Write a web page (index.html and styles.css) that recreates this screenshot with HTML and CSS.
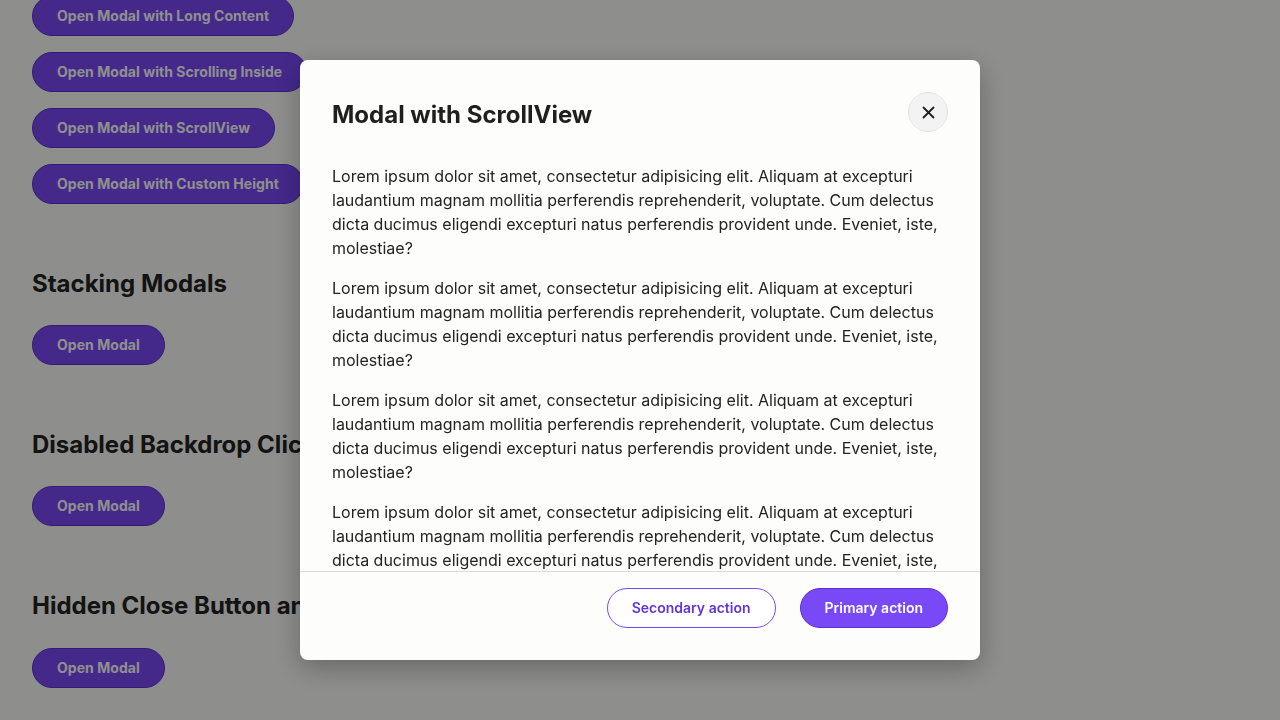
FILE: index.html
```html
<!DOCTYPE html>
<html lang="en">
<head>
<meta charset="utf-8">
<title>Modals</title>
<link rel="stylesheet" href="styles.css">
</head>
<body>
<main class="page">
  <div class="btn-stack">
    <button class="btn btn-primary">Open Modal with Long Content</button>
    <button class="btn btn-primary">Open Modal with Scrolling Inside</button>
    <button class="btn btn-primary">Open Modal with ScrollView</button>
    <button class="btn btn-primary">Open Modal with Custom Height</button>
  </div>
  <section class="section">
    <h2 class="section-title">Stacking Modals</h2>
    <button class="btn btn-primary">Open Modal</button>
  </section>
  <section class="section">
    <h2 class="section-title">Disabled Backdrop Click</h2>
    <button class="btn btn-primary">Open Modal</button>
  </section>
  <section class="section section-last">
    <h2 class="section-title">Hidden Close Button and Header</h2>
    <button class="btn btn-primary">Open Modal</button>
  </section>
</main>

<div class="backdrop">
  <div class="modal" role="dialog" aria-modal="true">
    <header class="modal-header">
      <h1 class="modal-title">Modal with ScrollView</h1>
      <button class="close-btn" aria-label="Close">
        <svg width="13" height="13" viewBox="0 0 13 13" fill="none" stroke="#1f1f1f" stroke-width="1.8" stroke-linecap="round"><path d="M1.5 1.5L11.5 11.5M11.5 1.5L1.5 11.5"/></svg>
      </button>
    </header>
    <div class="modal-body">
      <p>Lorem ipsum dolor sit amet, consectetur adipisicing elit. Aliquam at excepturi laudantium magnam mollitia perferendis reprehenderit, voluptate. Cum delectus dicta ducimus eligendi excepturi natus perferendis provident unde. Eveniet, iste, molestiae?</p>
      <p>Lorem ipsum dolor sit amet, consectetur adipisicing elit. Aliquam at excepturi laudantium magnam mollitia perferendis reprehenderit, voluptate. Cum delectus dicta ducimus eligendi excepturi natus perferendis provident unde. Eveniet, iste, molestiae?</p>
      <p>Lorem ipsum dolor sit amet, consectetur adipisicing elit. Aliquam at excepturi laudantium magnam mollitia perferendis reprehenderit, voluptate. Cum delectus dicta ducimus eligendi excepturi natus perferendis provident unde. Eveniet, iste, molestiae?</p>
      <p>Lorem ipsum dolor sit amet, consectetur adipisicing elit. Aliquam at excepturi laudantium magnam mollitia perferendis reprehenderit, voluptate. Cum delectus dicta ducimus eligendi excepturi natus perferendis provident unde. Eveniet, iste, molestiae?</p>
      <p>Lorem ipsum dolor sit amet, consectetur adipisicing elit. Aliquam at excepturi laudantium magnam mollitia perferendis reprehenderit, voluptate. Cum delectus dicta ducimus eligendi excepturi natus perferendis provident unde. Eveniet, iste, molestiae?</p>
    </div>
    <footer class="modal-footer">
      <button class="btn btn-secondary btn-modal">Secondary action</button>
      <button class="btn btn-primary btn-modal">Primary action</button>
    </footer>
  </div>
</div>
</body>
</html>
```

FILE: styles.css
```css
* { box-sizing: border-box; }

html, body {
  margin: 0;
  height: 100%;
  overflow: hidden;
}

body {
  background: #fdfdfb;
  color: #212121;
  font-family: Inter, "Noto Sans", sans-serif;
}

.page {
  padding: 0 32px;
  margin-top: -4px;
}

.btn-stack {
  display: flex;
  flex-direction: column;
  align-items: flex-start;
  gap: 16px;
}

.btn {
  display: inline-flex;
  align-items: center;
  justify-content: center;
  height: 40px;
  padding: 0 24px;
  border-radius: 20px;
  font-family: Inter, "Noto Sans", sans-serif;
  font-size: 14px;
  font-weight: 700;
  letter-spacing: 0.05px;
  line-height: 1;
  cursor: pointer;
  white-space: nowrap;
}

.btn-modal {
  font-weight: 600;
  letter-spacing: 0;
}

.btn-primary {
  background: #7a49f7;
  border: 1px solid #5d33cf;
  color: #ffffff;
}

.btn-secondary {
  background: #ffffff;
  border: 1px solid #7a49f7;
  color: #5f35d6;
}

.section {
  margin-top: 64px;
  display: flex;
  flex-direction: column;
  align-items: flex-start;
}

.section-title {
  margin: 0 0 25px;
  font-size: 24px;
  line-height: 32px;
  font-weight: 700;
  color: #222222;
  white-space: nowrap;
}

.section-last .section-title {
  margin-bottom: 26px;
}

.backdrop {
  position: fixed;
  inset: 0;
  background: rgba(0, 0, 0, 0.44);
  display: flex;
  align-items: center;
  justify-content: center;
}

.modal {
  width: 680px;
  height: 600px;
  background: #fdfdfb;
  border-radius: 8px;
  box-shadow: 0 8px 28px rgba(0, 0, 0, 0.28);
  display: flex;
  flex-direction: column;
  overflow: hidden;
}

.modal-header {
  display: flex;
  align-items: center;
  justify-content: space-between;
  padding: 32px 32px 0;
}

.modal-title {
  margin: 0;
  font-size: 24px;
  line-height: 32px;
  font-weight: 700;
  color: #1f1f1f;
  position: relative;
  top: 3px;
}

.close-btn {
  width: 40px;
  height: 40px;
  border-radius: 50%;
  background: #f3f3f3;
  border: 1px solid #e2e2e2;
  display: flex;
  align-items: center;
  justify-content: center;
  padding: 0;
  cursor: pointer;
}

.modal-body {
  flex: 1;
  min-height: 0;
  overflow: hidden;
  padding: 32px 32px 0;
}

.modal-body p {
  margin: 0 0 16px;
  font-size: 16px;
  line-height: 24px;
  color: #232323;
}

.modal-footer {
  border-top: 1px solid #dcdcdc;
  padding: 16px 32px 32px;
  display: flex;
  justify-content: flex-end;
  gap: 24px;
}
```
